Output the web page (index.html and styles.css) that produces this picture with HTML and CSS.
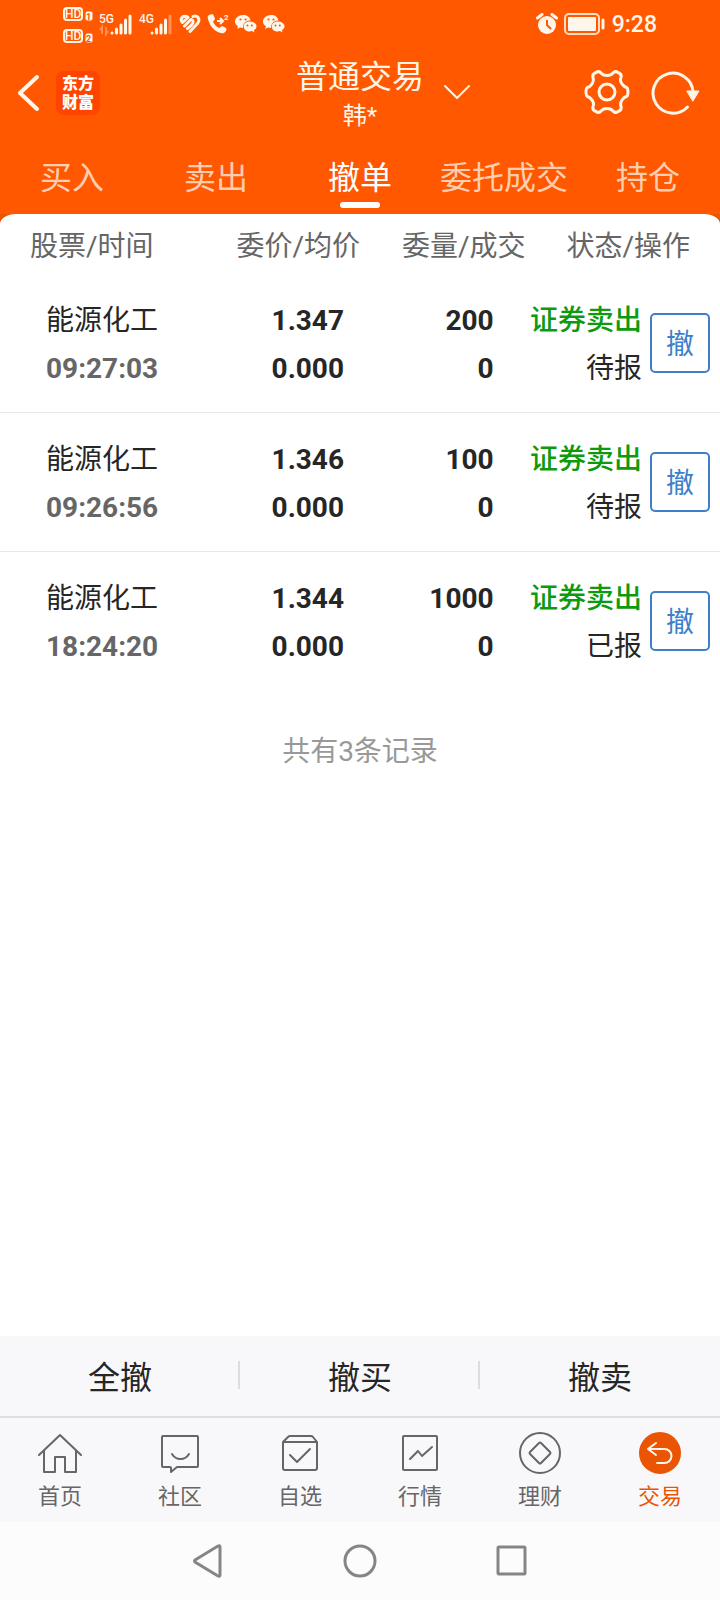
FILE: index.html
```html
<!DOCTYPE html>
<html lang="zh-CN">
<head>
<meta charset="utf-8">
<meta name="viewport" content="width=device-width, initial-scale=1">
<title>普通交易</title>
<link rel="stylesheet" href="styles.css">
</head>
<body>
<div class="app">
  <header class="top">
    <div class="status">
      <div class="status-group">
        <svg class="hd" width="30" height="36" viewBox="0 0 30 36" fill="none" stroke="currentColor">
          <rect x="1" y="2" width="18" height="12" rx="3" stroke-width="2"/>
          <rect x="1" y="24" width="18" height="12" rx="3" stroke-width="2"/>
          <rect x="23" y="6" width="6" height="8" rx="1" fill="currentColor"/>
          <rect x="23" y="28" width="6" height="8" rx="1" fill="currentColor"/>
          <g class="hd-text"><text x="2" y="12">HD</text><text x="2" y="34">HD</text></g>
          <g class="hd-num"><text x="23" y="14">1</text><text x="23" y="36">2</text></g>
        </svg>
        <svg width="34" height="36" viewBox="0 0 34 36" fill="none" stroke="currentColor">
          <text class="net" x="0" y="17">5G</text>
          <path d="M3 28v-7l-2 3M7 21v7l2-3" stroke-width="2" opacity=".35"/>
          <g stroke-width="3" stroke-linecap="round"><path d="M13 27v0M17.500 23v4M22 19v8M26.500 14v13M31 10v17"/></g>
        </svg>
        <svg width="34" height="36" viewBox="0 0 34 36" fill="none" stroke="currentColor">
          <text class="net" x="0" y="17">4G</text>
          <g stroke-width="3" stroke-linecap="round"><path d="M13 27v0M17.500 23v4M22 19v8M26.500 14v13"/><path d="M31 10v17" opacity=".35"/></g>
        </svg>
        <svg width="22" height="20" viewBox="0 0 22 20" fill="none" stroke="currentColor" stroke-width="3" stroke-linecap="round" stroke-linejoin="round">
          <path d="M2.500 7.500Q1.500 3.500 4.500 2.500T9 3.500L3.500 8.500M5.500 12L11 6.500Q13 4.500 14 7T8.500 14.500M11 17.500l7.500-8Q21 6 19 3.500T14 2.500"/>
        </svg>
        <svg width="22" height="22" viewBox="0 0 22 22">
          <path fill="currentColor" d="M2 2l3-1q1 0 2 2l1 3-2 3q2 4 6 6l3-2 4 2q1 1 0 3l-2 2q-3 1-8-2Q3 14 1 6 0 3 2 2z"/>
          <path d="M10 8h6M13 5l3 3-3 3" fill="none" stroke="currentColor" stroke-width="2"/>
          <text class="sup" x="17" y="7">2</text>
        </svg>
        <svg width="22" height="20" viewBox="0 0 22 20"><use href="#chat-bubbles"/></svg>
        <svg width="22" height="20" viewBox="0 0 22 20">
          <g id="chat-bubbles">
            <path fill="currentColor" d="M8 1C3.500 1 0 4 0 7.500c0 2 1 3.500 3 5L2 15l3-1.500 3 .5C8 9 11 6.500 15.500 6.500 15 3 12 1 8 1z"/>
            <path fill="currentColor" d="M14.500 7.500C11 7.500 8.700 10 8.700 12.500c0 3 2.800 5 6 5l2.300-.4 2.500 1.400-.6-2.200c1.600-1 2.600-2.300 2.600-4 0-2.700-3-4.800-7-4.800z"/>
            <g fill="#ff5800"><circle cx="5.500" cy="5.500" r="1.100"/><circle cx="10.500" cy="5.500" r="1.100"/><circle cx="12.500" cy="11.500" r="1"/><circle cx="16.800" cy="11.500" r="1"/></g>
          </g>
        </svg>
      </div>
      <div class="status-group status-right">
        <svg width="22" height="22" viewBox="0 0 22 22">
          <circle cx="11" cy="12" r="9" fill="currentColor"/>
          <path d="M1.500 5L6 1.500M20.500 5L16 1.500" stroke="currentColor" stroke-width="3" stroke-linecap="round"/>
          <path d="M11 7v5l4 4" fill="none" stroke="#ff5800" stroke-width="2"/>
        </svg>
        <svg width="42" height="22" viewBox="0 0 42 22" fill="none">
          <rect x="1" y="1" width="34" height="20" rx="4" stroke="currentColor" stroke-width="2" opacity=".85"/>
          <rect x="4" y="4" width="28" height="14" rx="1" fill="currentColor"/>
          <path d="M39 7v8" stroke="currentColor" stroke-width="3" stroke-linecap="round"/>
        </svg>
        <time class="clock">9:28</time>
      </div>
    </div>

    <div class="titlebar">
      <div class="title-left">
        <button class="icon-btn" type="button" aria-label="返回">
          <svg width="22" height="38" viewBox="0 0 22 38" fill="none" stroke="currentColor" stroke-width="4" stroke-linecap="round" stroke-linejoin="round"><path d="M19 3L2 19l17 16"/></svg>
        </button>
        <div class="logo"><span>东方</span><span>财富</span></div>
      </div>
      <div class="title-text">
        <h1>普通交易</h1>
        <p>韩*</p>
      </div>
      <div class="title-right">
        <button class="icon-btn" type="button" aria-label="切换账户">
          <svg width="26" height="14" viewBox="0 0 26 14" fill="none" stroke="currentColor" stroke-width="2" stroke-linecap="round"><path d="M1 1l12 12L25 1"/></svg>
        </button>
        <div class="tools">
          <button class="icon-btn" type="button" aria-label="设置">
            <svg width="46" height="46" viewBox="0 0 46 46" fill="none" stroke="currentColor" stroke-width="3" stroke-linejoin="round">
              <path d="M12 3.500Q15 1.500 17 4Q19 6.500 23 6.500T29 4Q31 1.500 34 3.500Q38 5 37 8.500Q35.500 12 38 15T42.500 18.500Q44 19 44 23T42.500 27.500Q40 28 38 31T37 37.500Q38 41 34 42.500Q31 44.500 29 42Q27 39.500 23 39.500T17 42Q15 44.500 12 42.500Q8 41 9 37.500Q10.500 34 8 31T3.500 27.500Q2 27 2 23T3.500 18.500Q6 18 8 15T9 8.500Q8 5 12 3.500Z"/>
              <circle cx="23" cy="23" r="8"/>
            </svg>
          </button>
          <button class="icon-btn" type="button" aria-label="刷新">
            <svg width="50" height="46" viewBox="0 0 50 46" fill="none" stroke="currentColor" stroke-width="3" stroke-linecap="round">
              <path d="M37.500 38A20 20 0 1 1 43 23"/><path d="M37 22h12l-6 10z" fill="currentColor" stroke-width="1"/>
            </svg>
          </button>
        </div>
      </div>
    </div>

    <nav class="tabs" aria-label="交易">
      <a href="#">买入</a>
      <a href="#">卖出</a>
      <a href="#" class="active" aria-current="page">撤单</a>
      <a href="#">委托成交</a>
      <a href="#">持仓</a>
    </nav>
    <div class="cap"><div class="cap-inner"></div></div>
  </header>

  <main class="content">
    <table class="orders">
      <thead>
        <tr><th scope="col">股票/时间</th><th scope="col">委价/均价</th><th scope="col">委量/成交</th><th scope="col">状态/操作</th></tr>
      </thead>
      <tbody>
        <tr>
          <td>能源化工<span class="sub">09:27:03</span></td>
          <td class="num">1.347<span>0.000</span></td>
          <td class="num">200<span>0</span></td>
          <td><div class="state"><div><span class="sell">证券卖出</span><span>待报</span></div><button class="cancel" type="button">撤</button></div></td>
        </tr>
        <tr>
          <td>能源化工<span class="sub">09:26:56</span></td>
          <td class="num">1.346<span>0.000</span></td>
          <td class="num">100<span>0</span></td>
          <td><div class="state"><div><span class="sell">证券卖出</span><span>待报</span></div><button class="cancel" type="button">撤</button></div></td>
        </tr>
        <tr>
          <td>能源化工<span class="sub">18:24:20</span></td>
          <td class="num">1.344<span>0.000</span></td>
          <td class="num">1000<span>0</span></td>
          <td><div class="state"><div><span class="sell">证券卖出</span><span>已报</span></div><button class="cancel" type="button">撤</button></div></td>
        </tr>
      </tbody>
    </table>
    <p class="count">共有3条记录</p>
  </main>

  <div class="actions">
    <button type="button">全撤</button>
    <button type="button">撤买</button>
    <button type="button">撤卖</button>
  </div>

  <nav class="bottom-nav" aria-label="主导航">
    <a href="#">
      <svg class="nav-icon" viewBox="0 0 44 44"><path d="M1 24L22 4l21 20M6 20v21h11V26h10v15h11V20"/></svg>
      <span>首页</span>
    </a>
    <a href="#">
      <svg class="nav-icon" viewBox="0 0 44 44"><path d="M5 5h34q1 0 1 1v29q0 1-1 1H19l-6 5v-4q0-1-1-1H5q-1 0-1-1V6q0-1 1-1zM14 23q3 5 8.500 5t8.500-5"/></svg>
      <span>社区</span>
    </a>
    <a href="#">
      <svg class="nav-icon" viewBox="0 0 44 44"><path d="M5 11l5-5q1-1 2-1h21q1 0 2 1l4 5v26q0 2-2 2H7q-2 0-2-2zM5 11h34M12 24l7 7 13-13"/></svg>
      <span>自选</span>
    </a>
    <a href="#">
      <svg class="nav-icon" viewBox="0 0 44 44"><rect x="5" y="5" width="34" height="34" rx="1"/><path d="M12 28l8-8 4 5 10-9"/></svg>
      <span>行情</span>
    </a>
    <a href="#">
      <svg class="nav-icon" viewBox="0 0 44 44"><circle cx="22" cy="22" r="20"/><path d="M21 12q1-1 2 0l9 9q1 1 0 2l-9 9q-1 1-2 0l-9-9q-1-1 0-2z"/></svg>
      <span>理财</span>
    </a>
    <a href="#" class="active" aria-current="page">
      <svg class="nav-icon" viewBox="0 0 44 44"><circle cx="22" cy="22" r="20" fill="currentColor"/><path class="light" d="M18 12l-8 6 8 6M10 18h16.500a7 7 0 0 1 0 14H19"/></svg>
      <span>交易</span>
    </a>
  </nav>

  <div class="system-nav">
    <button class="icon-btn" type="button" aria-label="返回上一页"><svg width="36" height="36" viewBox="0 0 36 36"><path d="M5 17L28 3q2-1 2 1v28q0 2-2 1L5 19q-1-1 0-2z"/></svg></button>
    <button class="icon-btn" type="button" aria-label="主屏幕"><svg width="36" height="36" viewBox="0 0 36 36"><circle cx="18" cy="18" r="15"/></svg></button>
    <button class="icon-btn" type="button" aria-label="最近任务"><svg width="36" height="36" viewBox="0 0 36 36"><rect x="4" y="4" width="27" height="27" rx="1"/></svg></button>
  </div>
</div>
</body>
</html>
```
FILE: styles.css
```css
* {
  box-sizing: border-box;
}

body {
  margin: 0;
  background: #fff;
  color: #262626;
  font-family: Roboto, "Noto Sans CJK SC", sans-serif;
}

h1,
p {
  margin: 0;
  font-weight: 400;
}

a {
  color: inherit;
  text-decoration: none;
}

svg {
  display: block;
}

button {
  padding: 0;
  border: 0;
  background: none;
  color: inherit;
  font: inherit;
}

.app {
  display: flex;
  flex-direction: column;
  min-height: 100vh;
}

/* Header */
.top {
  background: #ff5800;
  color: #fff6ea;
}

.status {
  display: flex;
  justify-content: space-between;
  height: 48px;
  padding: 0 63px;
}

.status-group {
  display: flex;
  align-items: center;
  gap: 6px;
}

.status text {
  fill: currentColor;
  stroke: none;
  font-weight: 700;
}

.hd {
  overflow: visible;
}

.status .hd-text text {
  font-size: 12px;
  font-weight: 500;
}

.status .hd-num text {
  fill: #ff5800;
  font-size: 9px;
}

.status .net {
  font-size: 12px;
  font-weight: 500;
}

.sup {
  font-size: 8px;
}

.clock {
  font-size: 23px;
  font-weight: 500;
}

.titlebar {
  display: grid;
  grid-template-columns: 1fr auto 1fr;
  height: 96px;
  padding: 8px 18px 0;
}

.title-left {
  display: flex;
  align-items: center;
  gap: 16px;
  height: 74px;
}

.logo {
  display: flex;
  flex-direction: column;
  justify-content: center;
  align-items: center;
  width: 44px;
  height: 44px;
  border-radius: 8px;
  background: #ff4400;
  color: #fff;
  font-size: 16px;
  font-weight: 900;
  line-height: 19px;
}

.title-text {
  text-align: center;
}

.title-text h1 {
  font-size: 32px;
  line-height: 42px;
}

.title-text p {
  font-size: 24px;
  line-height: 36px;
}

.title-right {
  display: flex;
  align-items: center;
  justify-content: space-between;
  height: 72px;
  padding: 0 2px 0 20px;
}

.tools {
  display: flex;
  gap: 20px;
}

.tabs {
  display: grid;
  grid-template-columns: repeat(5, 1fr);
  padding-top: 10px;
}

.tabs a {
  display: flex;
  flex-direction: column;
  align-items: center;
  height: 60px;
  font-size: 32px;
  line-height: 48px;
  color: #ffceb0;
  white-space: nowrap;
}

.tabs .active {
  color: #fff;
}

.tabs .active::after {
  content: "";
  width: 40px;
  height: 6px;
  border-radius: 3px;
  background: #fff;
}

.cap {
  background: #e85500;
}

.cap-inner {
  height: 10px;
  border-radius: 16px 16px 0 0 / 10px 10px 0 0;
  background: #fff;
}

/* Order list */
.content {
  flex: 1;
}

.orders {
  width: 100%;
  table-layout: fixed;
  border-spacing: 0;
  font-size: 28px;
}

.orders th {
  padding: 2px 0 6px;
  color: #666;
  font-weight: 400;
  line-height: 42px;
  text-align: right;
  white-space: nowrap;
}

.orders th:nth-child(1) {
  width: 28%;
  padding-left: 30px;
  text-align: left;
}

.orders th:nth-child(2) {
  width: 22%;
}

.orders th:nth-child(3) {
  width: 23%;
}

.orders th:nth-child(4) {
  padding-right: 30px;
}

.orders td {
  padding: 23px 0 19px;
  border-bottom: 1px solid #e8e8e8;
  line-height: 48px;
  text-align: right;
  white-space: nowrap;
}

.orders tr:last-child td {
  border-bottom-color: transparent;
}

.orders td span {
  display: block;
}

.orders td:nth-child(1) {
  padding-left: 46px;
  text-align: left;
}

.orders td:nth-child(2) {
  padding-right: 16px;
}

.orders td:nth-child(3) {
  padding-right: 32px;
}

.orders td:nth-child(4) {
  padding-right: 10px;
}

.orders .num,
.orders .sub {
  font-weight: 700;
}

.orders .sub {
  color: #666;
}

.orders .sell {
  color: #0d9a0d;
  font-weight: 500;
}

.state {
  display: flex;
  align-items: center;
  justify-content: flex-end;
  gap: 8px;
}

.cancel {
  width: 60px;
  height: 60px;
  margin-bottom: 4px;
  padding-top: 4px;
  border: 2px solid #3d7fca;
  border-radius: 5px;
  color: #3d7fca;
  line-height: 52px;
}

.count {
  padding-top: 41px;
  color: #999;
  font-size: 28px;
  line-height: 40px;
  text-align: center;
}

/* Bottom bars */
.actions {
  display: grid;
  grid-template-columns: repeat(3, 1fr);
  height: 80px;
  padding-bottom: 2px;
  background: #f8f8fa;
  font-size: 32px;
}

.actions button {
  display: flex;
  align-items: center;
  justify-content: center;
}

.actions button:not(:last-child)::before {
  content: "";
  width: 2px;
  margin-right: auto;
}

.actions button:not(:last-child)::after {
  content: "";
  width: 2px;
  height: 28px;
  margin-left: auto;
  background: #ddd;
}

.bottom-nav {
  display: grid;
  grid-template-columns: repeat(6, 1fr);
  padding: 13px 0 9px;
  border-top: 2px solid #dfdfe1;
  background: #f8f8fa;
  color: #666;
}

.bottom-nav a {
  display: flex;
  flex-direction: column;
  align-items: center;
  gap: 6px;
  font-size: 22px;
  line-height: 32px;
}

.bottom-nav .active {
  color: #ea5504;
}

.nav-icon {
  width: 44px;
  height: 44px;
  fill: none;
  stroke: currentColor;
  stroke-width: 2;
  stroke-linecap: round;
  stroke-linejoin: round;
}

.nav-icon .light {
  stroke: #fff6ea;
}

.system-nav {
  display: flex;
  align-items: center;
  justify-content: center;
  gap: 116px;
  height: 78px;
  background: #fcfcfc;
  color: #858585;
}

.system-nav svg {
  fill: none;
  stroke: currentColor;
  stroke-width: 3;
}
```
